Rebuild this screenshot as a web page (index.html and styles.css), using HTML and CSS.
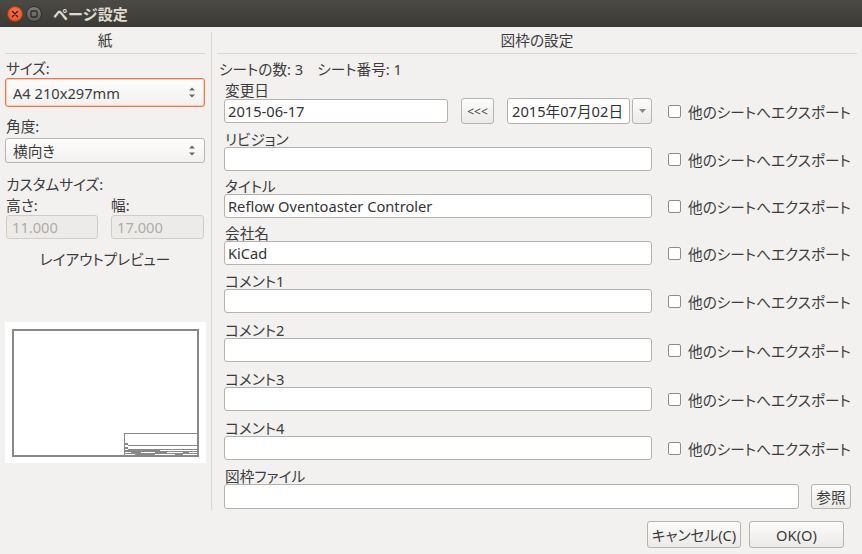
FILE: index.html
```html
<!DOCTYPE html>
<html lang="ja">
<head>
<meta charset="utf-8">
<title>ページ設定</title>
<link rel="stylesheet" href="styles.css">
</head>
<body>
<div class="window">
  <div class="titlebar">
    <div class="wbtn close">
      <svg width="8" height="8" viewBox="0 0 8 8"><path d="M1.5 1.5L6.5 6.5M6.5 1.5L1.5 6.5" stroke="#3a1a0c" stroke-width="1.4" stroke-linecap="round"/></svg>
    </div>
    <div class="wbtn maxb">
      <svg width="8" height="8" viewBox="0 0 8 8"><rect x="1" y="1" width="6" height="6" rx="1" fill="none" stroke="#2c2b28" stroke-width="1.3"/></svg>
    </div>
    <div class="title">ページ設定</div>
  </div>

  <div class="panels">
    <div class="left">
      <div class="phead">紙</div>
      <div class="label l-size">サイズ:</div>
      <div class="combo focus">
        <span>A4 210x297mm</span>
        <svg class="spin" width="6" height="11" viewBox="0 0 6 11"><path d="M0 3.5L3 0.5L6 3.5Z M0 7.5L3 10.5L6 7.5Z" fill="#666"/></svg>
      </div>
      <div class="label l-angle">角度:</div>
      <div class="combo">
        <span>横向き</span>
        <svg class="spin" width="6" height="11" viewBox="0 0 6 11"><path d="M0 3.5L3 0.5L6 3.5Z M0 7.5L3 10.5L6 7.5Z" fill="#666"/></svg>
      </div>
      <div class="label l-custom">カスタムサイズ:</div>
      <div class="dims">
        <div class="dim d1">
          <div class="label">高さ:</div>
          <div class="dinput">11.000</div>
        </div>
        <div class="dim d2">
          <div class="label">幅:</div>
          <div class="dinput">17.000</div>
        </div>
      </div>
      <div class="label l-preview">レイアウトプレビュー</div>
      <div class="preview">
        <svg width="201" height="141" viewBox="0 0 201 141">
          <rect x="8" y="8" width="185" height="126" fill="none" stroke="#888" stroke-width="2"/>
          <g stroke="#888" stroke-width="1" fill="none">
            <path d="M119.5 111v22M119 111.5h74"/>
            <path d="M123 123.5h70M123 127.5h70M119 129.5h74M119 131.5h74"/>
          </g>
          <g fill="#888">
            <rect x="119" y="121" width="4" height="2"/>
            <rect x="119" y="125" width="4" height="2"/>
            <rect x="119" y="128" width="36" height="1"/>
            <rect x="126" y="130" width="10" height="1"/>
            <rect x="150" y="130" width="12" height="1"/>
            <rect x="178" y="130" width="6" height="1"/>
            <rect x="130" y="132" width="20" height="1"/>
            <rect x="170" y="132" width="8" height="1"/>
          </g>
        </svg>
      </div>
    </div>

    <div class="vsep"></div>

    <div class="right">
      <div class="phead">図枠の設定</div>
      <div class="sheetinfo"><span class="si1">シートの数: 3</span><span>シート番号: 1</span></div>
      <div class="fields">
        <div class="field f1">
          <div class="label">変更日</div>
          <div class="ctrl-row tall">
            <div class="input w-date">2015-06-17</div>
            <div class="btn small">&lt;&lt;&lt;</div>
            <div class="datefield">2015年07月02日</div>
            <div class="btn dd"><svg width="7" height="4" viewBox="0 0 7 4"><path d="M0 0H7L3.5 4Z" fill="#888"/></svg></div>
            <div class="check"></div><div class="check-label">他のシートへエクスポート</div>
          </div>
        </div>
        <div class="field g7">
          <div class="label">リビジョン</div>
          <div class="ctrl-row">
            <div class="input"></div>
            <div class="check"></div><div class="check-label">他のシートへエクスポート</div>
          </div>
        </div>
        <div class="field g7">
          <div class="label">タイトル</div>
          <div class="ctrl-row">
            <div class="input">Reflow Oventoaster Controler</div>
            <div class="check"></div><div class="check-label">他のシートへエクスポート</div>
          </div>
        </div>
        <div class="field g7">
          <div class="label">会社名</div>
          <div class="ctrl-row">
            <div class="input">KiCad</div>
            <div class="check"></div><div class="check-label">他のシートへエクスポート</div>
          </div>
        </div>
        <div class="field g8">
          <div class="label">コメント1</div>
          <div class="ctrl-row">
            <div class="input"></div>
            <div class="check"></div><div class="check-label">他のシートへエクスポート</div>
          </div>
        </div>
        <div class="field g9">
          <div class="label">コメント2</div>
          <div class="ctrl-row">
            <div class="input"></div>
            <div class="check"></div><div class="check-label">他のシートへエクスポート</div>
          </div>
        </div>
        <div class="field g9">
          <div class="label">コメント3</div>
          <div class="ctrl-row">
            <div class="input"></div>
            <div class="check"></div><div class="check-label">他のシートへエクスポート</div>
          </div>
        </div>
        <div class="field g9">
          <div class="label">コメント4</div>
          <div class="ctrl-row">
            <div class="input"></div>
            <div class="check"></div><div class="check-label">他のシートへエクスポート</div>
          </div>
        </div>
        <div class="field g8">
          <div class="label">図枠ファイル</div>
          <div class="ctrl-row">
            <div class="input w-file"></div>
            <div class="btn browse">参照</div>
          </div>
        </div>
      </div>
    </div>
  </div>

  <div class="footer">
    <div class="btn fbtn cancel">キャンセル(C)</div>
    <div class="btn fbtn ok">OK(O)</div>
  </div>
</div>
</body>
</html>
```

FILE: styles.css
```css
html, body {
  margin: 0;
  padding: 0;
}
body {
  background: #f2f1f0;
  font-family: "Noto Sans", "Noto Sans CJK JP", sans-serif;
  font-size: 14.67px;
  font-feature-settings: "palt" 1;
  color: #3c3c3c;
}
.window {
  width: 862px;
  height: 554px;
  display: flex;
  flex-direction: column;
  overflow: hidden;
}

/* title bar */
.titlebar {
  height: 27px;
  flex: none;
  background: linear-gradient(#4b4a45, #3b3a36);
  display: flex;
  align-items: center;
  padding-left: 7px;
  box-sizing: border-box;
}
.wbtn {
  width: 16px;
  height: 16px;
  border-radius: 50%;
  box-sizing: border-box;
  display: flex;
  align-items: center;
  justify-content: center;
  flex: none;
}
.close {
  background: radial-gradient(circle at 50% 35%, #f7794d, #e0491a);
  border: 1px solid #a63c16;
}
.maxb {
  margin-left: 3px;
  background: linear-gradient(#7d7c77, #5d5c58);
  border: 1px solid #2f2e2b;
}
.title {
  margin-left: 11px;
  color: #dfdbd2;
  font-weight: bold;
  font-size: 15px;
  line-height: 16px;
  font-feature-settings: normal;
}

/* panels */
.panels {
  display: flex;
  height: 486px;
  flex: none;
}
.left {
  width: 211px;
  flex: none;
  box-sizing: border-box;
  padding: 0 6px 0 5px;
  display: flex;
  flex-direction: column;
}
.vsep {
  width: 1px;
  flex: none;
  margin: 5px 0 3px;
  background: #d9d6d2;
}
.right {
  flex: 1;
  display: flex;
  flex-direction: column;
}
.phead {
  height: 26px;
  line-height: 26px;
  text-align: center;
  border-bottom: 1px solid #d9d6d2;
  flex: none;
}
.right .phead {
  margin: 0 5px;
}
.label {
  height: 16px;
  line-height: 16px;
  padding-left: 1px;
  white-space: nowrap;
}

/* left column */
.l-size { margin-top: 6px; }
.l-angle { margin-top: 11px; }
.l-custom { margin-top: 13px; }
.l-preview {
  margin-top: 12px;
  text-align: center;
  padding-left: 0;
}
.combo {
  box-sizing: border-box;
  height: 25px;
  margin-top: 4px;
  border: 1px solid #b8b4af;
  border-radius: 3px;
  background: linear-gradient(#fdfdfd, #f2f1ef);
  display: flex;
  align-items: center;
  justify-content: space-between;
  padding: 0 9px 0 7px;
  white-space: nowrap;
}
.combo.focus {
  height: 29px;
  margin-top: 2px;
  border-color: #e9784c;
  box-shadow: inset 0 0 0 1px #f8cdbb;
}
.spin { flex: none; }
.dims {
  display: flex;
  gap: 13px;
  padding-left: 1px;
  margin-top: 5px;
}
.dims .label { padding-left: 0; }
.d1 { width: 92px; }
.d2 { width: 93px; }
.dinput {
  box-sizing: border-box;
  height: 24px;
  margin-top: 2px;
  border: 1px solid #d0cdc9;
  border-radius: 3px;
  background: #ecebe9;
  color: #aeaca8;
  padding-left: 5px;
  line-height: 22px;
}
.preview {
  margin-top: 55px;
  width: 201px;
  height: 141px;
  background: #ffffff;
  flex: none;
}
.preview svg { display: block; }

/* right column */
.sheetinfo {
  margin-top: 7px;
  padding-left: 7px;
  height: 16px;
  line-height: 16px;
  white-space: nowrap;
}
.si1 { margin-right: 14px; }
.fields {
  padding-left: 12px;
  display: flex;
  flex-direction: column;
}
.field.f1 { margin-top: 5px; }
.field.g7 { margin-top: 7px; }
.field.g8 { margin-top: 8px; }
.field.g9 { margin-top: 9px; }
.ctrl-row {
  display: flex;
  align-items: center;
  height: 24px;
}
.ctrl-row.tall { height: 26px; }
.input {
  box-sizing: border-box;
  width: 428px;
  height: 24px;
  flex: none;
  border: 1px solid #b6b2ad;
  border-radius: 3px;
  background: #ffffff;
  padding-left: 3px;
  line-height: 22px;
  color: #333;
  white-space: nowrap;
}
.input.w-date { width: 224px; }
.input.w-file { width: 575px; height: 25px; }
.datefield {
  box-sizing: border-box;
  width: 123px;
  height: 26px;
  margin-left: 13px;
  flex: none;
  border: 1px solid #b6b2ad;
  border-radius: 3px;
  background: #ffffff;
  padding-left: 4px;
  line-height: 24px;
  color: #333;
  white-space: nowrap;
}
.btn {
  box-sizing: border-box;
  flex: none;
  border: 1px solid #b7b3ad;
  border-radius: 3px;
  background: linear-gradient(#fcfcfb, #ebeae8);
  display: flex;
  align-items: center;
  justify-content: center;
  white-space: nowrap;
  color: #3c3c3c;
}
.btn.small {
  width: 33px;
  height: 26px;
  margin-left: 13px;
  font-size: 12px;
}
.btn.dd {
  width: 20px;
  height: 26px;
  margin-left: 2px;
}
.btn.browse {
  width: 40px;
  height: 25px;
  margin-left: 12px;
}
.check {
  box-sizing: border-box;
  width: 13px;
  height: 13px;
  margin-left: 16px;
  flex: none;
  border: 1px solid #8f8c87;
  border-radius: 2px;
  background: #ffffff;
}
.check-label {
  margin-left: 7px;
  white-space: nowrap;
}

/* footer */
.footer {
  display: flex;
  justify-content: flex-end;
  gap: 8px;
  padding: 8px 18px 0 0;
}
.fbtn { height: 27px; }
.cancel { width: 94px; }
.ok { width: 95px; }
```
